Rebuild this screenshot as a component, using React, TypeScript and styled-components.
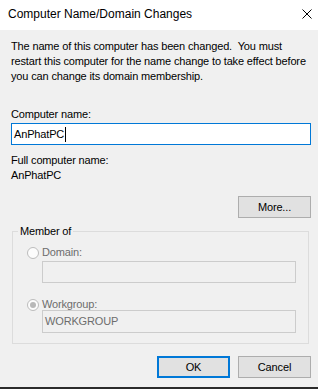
import React from "react";
import styled, { createGlobalStyle } from "styled-components";

const Global = createGlobalStyle`
  html, body { margin: 0; padding: 0; background: #f0f0f0; }
  body {
    font-family: "Liberation Sans", Arial, sans-serif;
    font-size: 11px;
    letter-spacing: -0.15px;
    color: #000;
  }
  * { box-sizing: border-box; }
`;

const Window = styled.div`
  width: 318px;
  height: 389px;
  background: #f0f0f0;
  display: flex;
  flex-direction: column;
  overflow: hidden;
`;

const TitleBar = styled.div`
  height: 30px;
  background: #fff;
  display: flex;
  align-items: center;
  justify-content: space-between;
  padding: 0 6px 2px 8px;
  flex: none;
`;

const Title = styled.span`
  font-size: 12px;
  line-height: 15px;
  letter-spacing: 0;
`;

const CloseIcon = styled.svg`
  width: 10px;
  height: 10px;
  display: block;
`;

const Body = styled.div`
  flex: 1;
  display: flex;
  flex-direction: column;
  padding: 9px 7px 0 11px;
`;

const Text = styled.div<{ $mt?: number }>`
  line-height: 15px;
  margin-top: ${(p) => p.$mt ?? 0}px;
  white-space: nowrap;
`;

const TextBox = styled.div<{ $focused?: boolean; $disabled?: boolean; $mt?: number; $h?: number }>`
  height: ${(p) => p.$h ?? 22}px;
  margin-top: ${(p) => p.$mt ?? 0}px;
  border: 1px solid ${(p) => (p.$focused ? "#0078d7" : p.$disabled ? "#cccccc" : "#7a7a7a")};
  background: ${(p) => (p.$disabled ? "#f0f0f0" : "#fff")};
  color: ${(p) => (p.$disabled ? "#6d6d6d" : "#000")};
  display: flex;
  align-items: center;
  padding-left: 2px;
  line-height: 15px;
`;

const Caret = styled.span`
  display: inline-block;
  width: 1px;
  height: 15px;
  background: #000;
  margin-left: 1px;
`;

const ButtonRow = styled.div<{ $mt: number }>`
  display: flex;
  justify-content: flex-end;
  gap: 8px;
  margin-top: ${(p) => p.$mt}px;
`;

const Button = styled.div<{ $default?: boolean }>`
  width: 73px;
  height: 22px;
  background: #e1e1e1;
  border: ${(p) => (p.$default ? "2px solid #0078d7" : "1px solid #adadad")};
  display: flex;
  align-items: center;
  justify-content: center;
  line-height: 15px;
`;

const Group = styled.fieldset`
  margin: 6px 2px 0 1px;
  padding: 0 12px 10px 5px;
  border: 1px solid #dcdcdc;
  min-width: 0;
`;

const Legend = styled.legend`
  padding: 0 2px;
  line-height: 15px;
`;

const GroupInner = styled.div`
  padding-left: 9px;
  display: flex;
  flex-direction: column;
`;

const RadioRow = styled.div<{ $mt: number }>`
  display: flex;
  align-items: center;
  gap: 3px;
  margin-top: ${(p) => p.$mt}px;
  line-height: 15px;
  color: #6d6d6d;
`;

const Radio = styled.span<{ $checked?: boolean }>`
  width: 12px;
  height: 12px;
  border-radius: 50%;
  border: 1px solid #bcbcbc;
  background: #fcfcfc;
  display: flex;
  align-items: center;
  justify-content: center;
  flex: none;
  &::after {
    content: "";
    display: ${(p) => (p.$checked ? "block" : "none")};
    width: 6px;
    height: 6px;
    border-radius: 50%;
    background: #b8b8b8;
  }
`;

const Field = styled.div`
  margin-left: 15px;
  display: flex;
  flex-direction: column;
`;

const BottomEdge = styled.div`
  height: 2px;
  background: #2b2b2b;
  flex: none;
`;

export default function App() {
  return (
    <>
      <Global />
      <Window>
        <TitleBar>
          <Title>Computer Name/Domain Changes</Title>
          <CloseIcon viewBox="0 0 10 10">
            <path d="M0.5 0.5 L9.5 9.5 M9.5 0.5 L0.5 9.5" stroke="#000" strokeWidth="1" fill="none" />
          </CloseIcon>
        </TitleBar>
        <Body>
          <Text>The name of this computer has been changed.&nbsp; You must</Text>
          <Text>restart this computer for the name change to take effect before</Text>
          <Text>you can change its domain membership.</Text>
          <Text $mt={23}>Computer name:</Text>
          <TextBox $focused $mt={1}>
            <span>AnPhatPC</span>
            <Caret />
          </TextBox>
          <Text $mt={8}>Full computer name:</Text>
          <Text>AnPhatPC</Text>
          <ButtonRow $mt={13}>
            <Button>More...</Button>
          </ButtonRow>
          <Group>
            <Legend>Member of</Legend>
            <GroupInner>
              <RadioRow $mt={6}>
                <Radio />
                <span>Domain:</span>
              </RadioRow>
              <Field>
                <TextBox $disabled $mt={1} />
              </Field>
              <RadioRow $mt={14}>
                <Radio $checked />
                <span>Workgroup:</span>
              </RadioRow>
              <Field>
                <TextBox $disabled $mt={-2} $h={23}>WORKGROUP</TextBox>
              </Field>
            </GroupInner>
          </Group>
          <ButtonRow $mt={12}>
            <Button $default>OK</Button>
            <Button>Cancel</Button>
          </ButtonRow>
        </Body>
        <BottomEdge />
      </Window>
    </>
  );
}
